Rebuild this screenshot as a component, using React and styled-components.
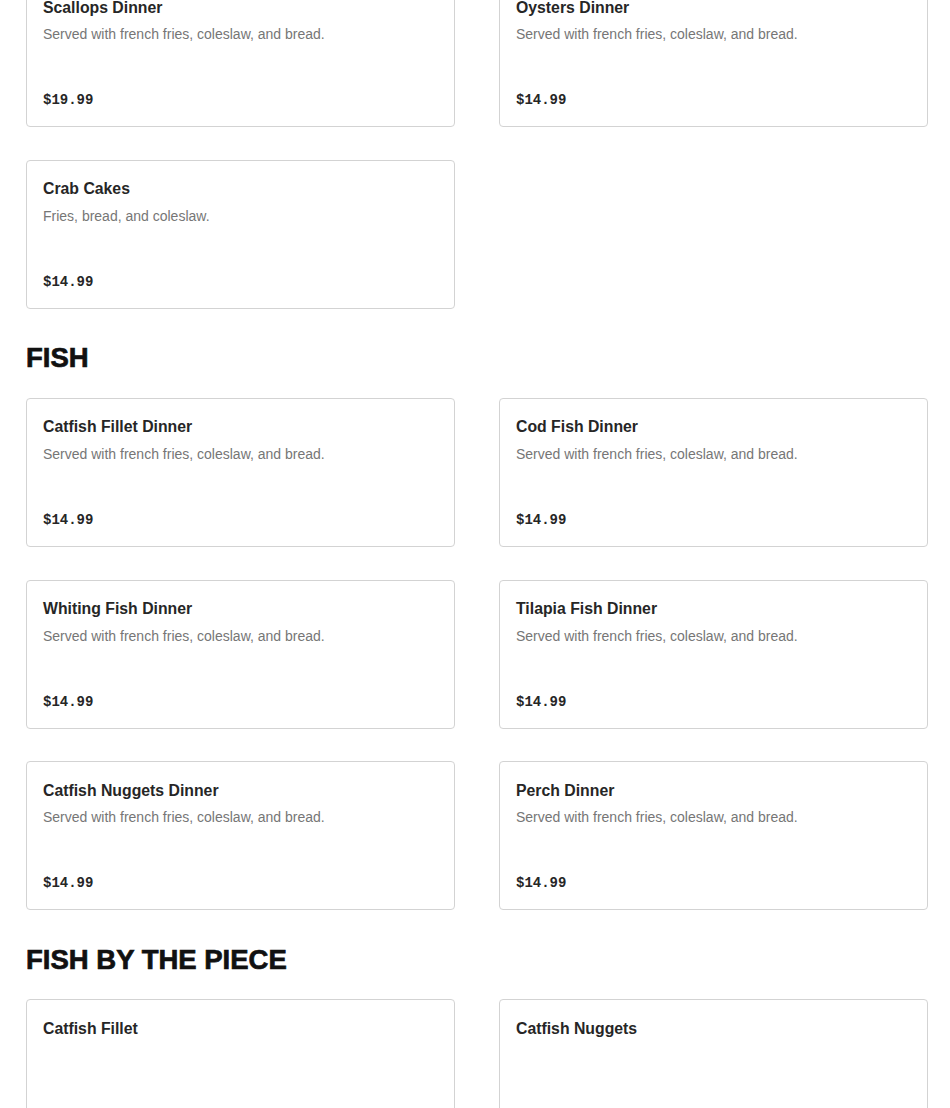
import React from "react";
import styled, { createGlobalStyle } from "styled-components";

const GlobalStyle = createGlobalStyle`
  body {
    margin: 0;
    background: #ffffff;
    font-family: "Liberation Sans", Arial, sans-serif;
    color: #222222;
  }
`;

const Page = styled.div`
  padding: 0 22px 0 26px;
  margin-top: -22px;
`;

const Section = styled.section`
  margin-bottom: 33.5px;
`;

const SectionTitle = styled.h2`
  font-family: "Liberation Sans", Arial, sans-serif;
  font-weight: 900;
  font-size: 27.5px;
  line-height: 32px;
  margin: 0 0 23.5px;
  text-transform: uppercase;
  color: #111111;
  -webkit-text-stroke: 0.7px #111111;
`;

const Grid = styled.div`
  display: grid;
  grid-template-columns: 429px 429px;
  column-gap: 44px;
  row-gap: 32.75px;
`;

const Card = styled.div`
  height: 149px;
  box-sizing: border-box;
  border: 1px solid #d3d3d3;
  border-radius: 4px;
  padding: 16.5px 16px 16px;
  display: flex;
  flex-direction: column;
`;

const Name = styled.div`
  font-size: 15.8px;
  font-weight: 600;
  line-height: 24px;
  color: #262626;
`;

const Desc = styled.div`
  margin-top: 4.5px;
  font-size: 14px;
  line-height: 20px;
  color: #767676;
`;

const Price = styled.div`
  margin-top: auto;
  font-family: "Liberation Mono", "Courier New", monospace;
  font-weight: 700;
  font-size: 14px;
  line-height: 20px;
  color: #262626;
`;

const sections = [
  {
    items: [
      { name: "Scallops Dinner", desc: "Served with french fries, coleslaw, and bread.", price: "$19.99" },
      { name: "Oysters Dinner", desc: "Served with french fries, coleslaw, and bread.", price: "$14.99" },
      { name: "Crab Cakes", desc: "Fries, bread, and coleslaw.", price: "$14.99" },
    ],
  },
  {
    title: "Fish",
    items: [
      { name: "Catfish Fillet Dinner", desc: "Served with french fries, coleslaw, and bread.", price: "$14.99" },
      { name: "Cod Fish Dinner", desc: "Served with french fries, coleslaw, and bread.", price: "$14.99" },
      { name: "Whiting Fish Dinner", desc: "Served with french fries, coleslaw, and bread.", price: "$14.99" },
      { name: "Tilapia Fish Dinner", desc: "Served with french fries, coleslaw, and bread.", price: "$14.99" },
      { name: "Catfish Nuggets Dinner", desc: "Served with french fries, coleslaw, and bread.", price: "$14.99" },
      { name: "Perch Dinner", desc: "Served with french fries, coleslaw, and bread.", price: "$14.99" },
    ],
  },
  {
    title: "Fish by the Piece",
    items: [
      { name: "Catfish Fillet" },
      { name: "Catfish Nuggets" },
    ],
  },
];

function MenuCard({ name, desc, price }) {
  return (
    <Card>
      <Name>{name}</Name>
      {desc && <Desc>{desc}</Desc>}
      {price && <Price>{price}</Price>}
    </Card>
  );
}

export default function App() {
  return (
    <>
      <GlobalStyle />
      <Page>
        {sections.map((s, i) => (
          <Section key={i}>
            {s.title && <SectionTitle>{s.title}</SectionTitle>}
            <Grid>
              {s.items.map((item) => (
                <MenuCard key={item.name} {...item} />
              ))}
            </Grid>
          </Section>
        ))}
      </Page>
    </>
  );
}
